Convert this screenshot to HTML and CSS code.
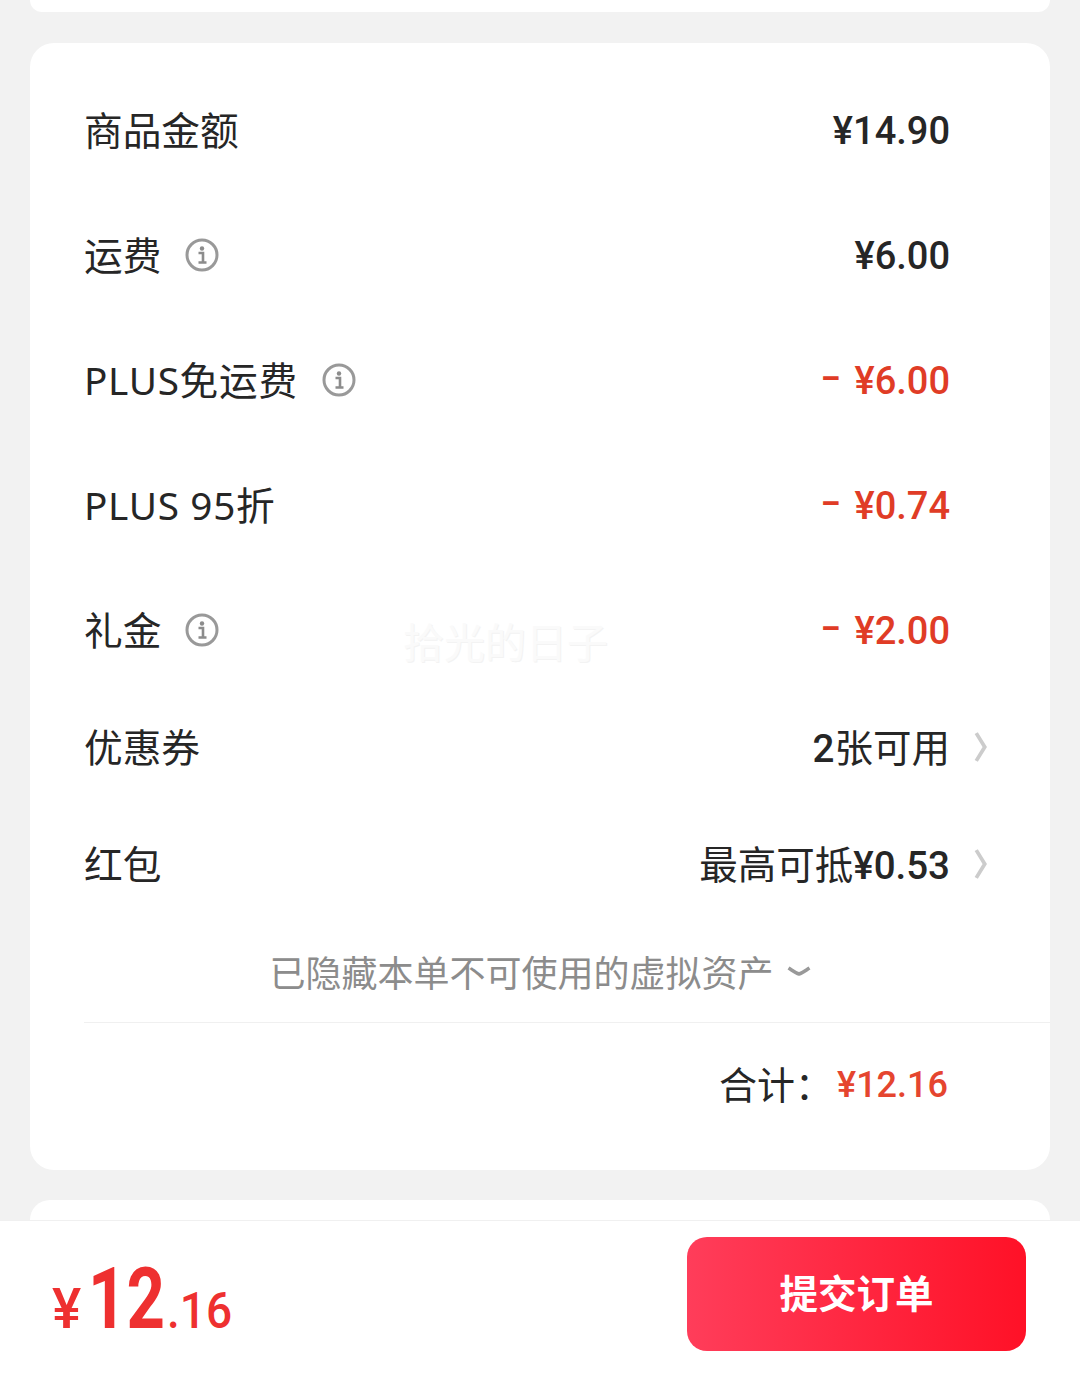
FILE: index.html
```html
<!DOCTYPE html>
<html>
  <head>
    <title>提交订单</title>
    <link rel="stylesheet" href="styles.css">
  </head>
  <body>
    <div class="page">
      <div class="card card-prev"></div>
      <div class="card card-fees">
        <div class="row">
          <span class="label">商品金额</span>
          <span class="amount">¥14.90</span>
        </div>
        <div class="row">
          <span class="label">运费</span>
          <svg class="info" viewBox="0 0 34 34"><circle cx="17" cy="17" r="15" fill="none" stroke="#999" stroke-width="3"/><circle cx="17" cy="10.500" r="2.200" fill="#8c8c8c"/><path d="M13.500 15h4.500v9M13.500 24.500h8" fill="none" stroke="#8c8c8c" stroke-width="2.600"/></svg>
          <span class="amount">¥6.00</span>
        </div>
        <div class="row">
          <span class="label label-plus">PLUS免运费</span>
          <svg class="info" viewBox="0 0 34 34"><circle cx="17" cy="17" r="15" fill="none" stroke="#999" stroke-width="3"/><circle cx="17" cy="10.500" r="2.200" fill="#8c8c8c"/><path d="M13.500 15h4.500v9M13.500 24.500h8" fill="none" stroke="#8c8c8c" stroke-width="2.600"/></svg>
          <span class="amount discount"><span class="minus">–</span>¥6.00</span>
        </div>
        <div class="row">
          <span class="label label-plus">PLUS 95折</span>
          <span class="amount discount"><span class="minus">–</span>¥0.74</span>
        </div>
        <div class="row">
          <span class="label">礼金</span>
          <svg class="info" viewBox="0 0 34 34"><circle cx="17" cy="17" r="15" fill="none" stroke="#999" stroke-width="3"/><circle cx="17" cy="10.500" r="2.200" fill="#8c8c8c"/><path d="M13.500 15h4.500v9M13.500 24.500h8" fill="none" stroke="#8c8c8c" stroke-width="2.600"/></svg>
          <span class="amount discount"><span class="minus">–</span>¥2.00</span>
        </div>
        <div class="row row-link">
          <span class="label">优惠券</span>
          <span class="link-text"><span class="num">2</span>张可用</span>
          <svg class="chevron" viewBox="0 0 12 30"><path d="M2 2l8 13-8 13" fill="none" stroke="#ccc" stroke-width="3.500"/></svg>
        </div>
        <div class="row row-link">
          <span class="label">红包</span>
          <span class="link-text">最高可抵<span class="num">¥0.53</span></span>
          <svg class="chevron" viewBox="0 0 12 30"><path d="M2 2l8 13-8 13" fill="none" stroke="#ccc" stroke-width="3.500"/></svg>
        </div>
        <div class="hidden-note">
          <span>已隐藏本单不可使用的虚拟资产</span>
          <svg class="chevron-down" viewBox="0 0 24 10"><path d="M1.500 2c4 2.500 7 5 10.500 6 3.500-1 6.500-3.500 10.500-6" fill="none" stroke="#999" stroke-width="3.500"/></svg>
        </div>
        <div class="divider"></div>
        <div class="total">
          <span class="total-label">合计：</span>
          <span class="total-value">¥12.16</span>
        </div>
        <div class="watermark">拾光的日子</div>
      </div>
      <div class="card card-next"></div>
      <div class="bottom-bar">
        <div class="price">
          <span class="price-sign">¥</span><span class="price-int">12</span><span class="price-dec">.16</span>
        </div>
        <button class="submit">提交订单</button>
      </div>
    </div>
  </body>
</html>
```

FILE: styles.css
```css
body {
  margin: 0;
  padding: 0;
  background-color: #f2f2f2;
  font-family: "Noto Sans CJK SC", "Noto Sans", sans-serif;
  color: #262626;
}

.page {
  height: 1387px;
  overflow: hidden;
  display: flex;
  flex-direction: column;
}

.card {
  margin: 0 30px;
  background-color: #fff;
  border-radius: 24px;
}

.card-prev {
  height: 12px;
  margin-bottom: 31px;
  border-radius: 0 0 24px 24px;
}

.card-fees {
  position: relative;
  padding: 57px 0 60px 0;
}

.card-next {
  height: 20px;
  margin-top: 30px;
  border-radius: 24px 24px 0 0;
}

.row {
  display: flex;
  align-items: center;
  height: 60px;
  padding: 0 100px 0 55px;
}

.row + .row {
  margin-top: 65px;
}

.row.row-link {
  margin-top: 57px;
  padding-right: 63px;
}

.label {
  font-family: "Noto Sans", "Noto Sans CJK SC", sans-serif;
  font-size: 38.7px;
  line-height: 60px;
  white-space: nowrap;
  margin-left: -1px;
}

.label-plus {
  letter-spacing: 0.7px;
}

.info {
  width: 34px;
  height: 34px;
  margin-left: 24px;
}

.amount {
  margin-left: auto;
  padding-top: 2px;
  font-family: Roboto, sans-serif;
  font-size: 38px;
  font-weight: 500;
  line-height: 60px;
}

.link-text {
  margin-left: auto;
  font-size: 38.5px;
  line-height: 60px;
  white-space: nowrap;
}

.num {
  font-family: Roboto, sans-serif;
  font-weight: 500;
}

.discount {
  color: #e03c26;
}

.minus {
  margin-right: 15px;
  font-size: 30px;
  font-weight: 900;
  line-height: 0;
  vertical-align: 6px;
}

.chevron {
  width: 13px;
  height: 32px;
  margin-left: 24px;
}

.hidden-note {
  display: flex;
  align-items: center;
  justify-content: center;
  height: 50px;
  margin-top: 52px;
  font-size: 36px;
  color: #8c8c8c;
}

.chevron-down {
  width: 24px;
  height: 10px;
  margin-left: 13px;
}

.divider {
  height: 1px;
  margin: 26px 0 0 54px;
  background-color: #f0f0f0;
}

.total {
  display: flex;
  align-items: center;
  justify-content: flex-end;
  height: 50px;
  margin-top: 37px;
  padding-right: 102px;
}

.total-label {
  font-size: 38px;
  margin-right: 4px;
  padding-bottom: 5px;
}

.total-value {
  font-family: Roboto, sans-serif;
  font-size: 36px;
  font-weight: 500;
  color: #e5452f;
}

.watermark {
  position: absolute;
  left: 373px;
  top: 567px;
  font-size: 41px;
  color: #fafafa;
  text-shadow: 1px 1px 0 #f3f3f3;
}

.bottom-bar {
  flex: 1;
  display: flex;
  align-items: center;
  justify-content: space-between;
  padding: 0 54px 20px 52px;
  background-color: #fff;
  border-top: 1px solid #f0f0f0;
}

.price {
  font-family: Roboto, sans-serif;
  font-weight: 700;
  color: #ee3030;
  margin-top: 34px;
  line-height: 80px;
}

.price-sign {
  font-weight: 500;
  font-size: 55px;
  margin-right: 7px;
}

/* digits in the reference are narrower than any installed font */
.price-int {
  display: inline-block;
  font-size: 86px;
  margin-right: -20px;
  transform: scaleX(0.78);
  transform-origin: left;
}

.price-dec {
  display: inline-block;
  font-size: 50px;
  font-weight: 500;
  transform: scaleX(0.92);
  transform-origin: left;
}

.submit {
  width: 339px;
  height: 114px;
  padding: 0 0 6px 0;
  border: none;
  border-radius: 20px;
  background: linear-gradient(90deg, #ff3d5a, #ff1127);
  color: #fff;
  font-family: "Noto Sans CJK SC", sans-serif;
  font-size: 38.5px;
  font-weight: 700;
}
```
